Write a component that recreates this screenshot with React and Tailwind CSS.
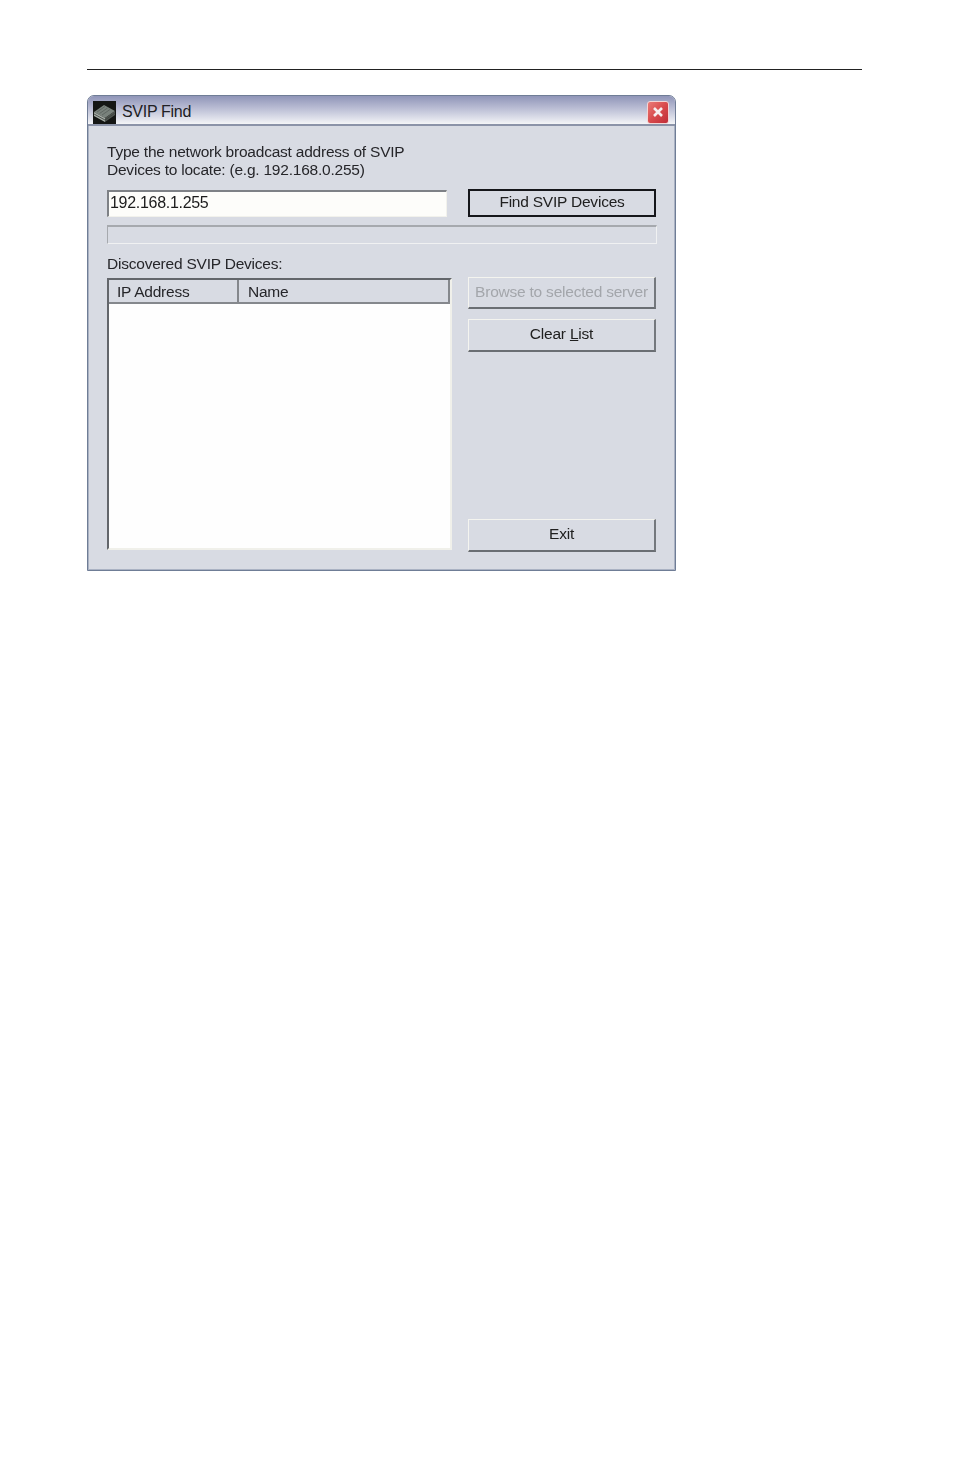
const font = "font-['Liberation_Sans',Arial,sans-serif]";

function RaisedButton({ children, disabled, className = '' }) {
  return (
    <button
      disabled={disabled}
      className={`w-[188px] flex items-center justify-center pb-[2px] border-t border-l border-r-2 border-b-2 border-t-[#f4f4ef] border-l-[#f4f4ef] border-r-[#74787d] border-b-[#6a6e73] bg-[#d8dbe3] text-[15.5px] leading-none tracking-[-0.22px] ${
        disabled ? 'text-[#a3a6ab]' : 'text-[#202020]'
      } ${className}`}
    >
      {children}
    </button>
  );
}

function AppIcon() {
  return (
    <svg width="23" height="23" viewBox="0 0 23 23" className="shrink-0">
      <rect width="23" height="23" fill="#141614" />
      <path d="M1 11 L11 4 L22 10 L12 17 Z" fill="#79827c" />
      <path d="M1 11 L12 17 L12 21 L1 15 Z" fill="#a5aca6" />
      <path d="M12 17 L22 10 L22 14 L12 21 Z" fill="#505651" />
      <path d="M4 11 L12 5.5 M6.5 12.5 L14.5 7 M9 14 L17 8.5" stroke="#5f6662" strokeWidth="1" />
      <path d="M1 13 L12 19 L22 12" fill="none" stroke="#3a3f3b" strokeWidth="0.8" />
    </svg>
  );
}

function CloseButton() {
  return (
    <div className="w-[22px] h-[23px] rounded-[3px] border border-[#f2d6d6] bg-gradient-to-br from-[#ea7a78] via-[#d84a4c] to-[#c02c38] flex items-center justify-center">
      <svg width="12" height="12" viewBox="0 0 12 12">
        <path d="M2 2 L10 10 M10 2 L2 10" stroke="#f7eeee" strokeWidth="2.6" />
      </svg>
    </div>
  );
}

export default function App() {
  return (
    <div className={`${font} min-h-[1474px] bg-white pt-[69px] pl-[87px] pr-[92px]`}>
      <div className="h-px bg-[#222222]" />

      {/* dialog */}
      <div className="mt-[25px] w-[589px] h-[476px] flex flex-col rounded-t-[7px] border border-[#6f7d96] bg-[#d8dbe3] overflow-hidden blur-[0.4px]">
        {/* title bar */}
        <div className="h-[30px] shrink-0 flex items-center pt-[4px] pl-[5px] pr-[6px] bg-gradient-to-b from-[#9095b8] via-[#c0c3d8] to-[#f4f5f7] border-b-2 border-[#8b93a8]">
          <AppIcon />
          <span className="ml-[6px] text-[16px] tracking-[-0.3px] text-[#202024]">SVIP Find</span>
          <div className="ml-auto">
            <CloseButton />
          </div>
        </div>

        {/* body */}
        <div className="flex-1 flex flex-col pl-[18px] pr-[17px] pt-[17px] pb-[19px] border-x border-b border-[#aab2c3] text-[#26262a] text-[15.5px] tracking-[-0.22px]">
          <p className="leading-[18px]">
            Type the network broadcast address of SVIP
            <br />
            Devices to locate: (e.g. 192.168.0.255)
          </p>

          <div className="mt-[10px] flex justify-between">
            <div className="w-[340px] h-[27px] mt-px flex items-center pl-[1px] pb-[2px] bg-[#fdfdfa] border-t-2 border-l-2 border-t-[#7e8186] border-l-[#7e8186] border-b border-r border-b-[#f2f2ec] border-r-[#f2f2ec] text-[16px] tracking-[-0.3px] text-[#1c1c1c]">
              192.168.1.255
            </div>
            <button className="w-[188px] h-[28px] mr-px flex items-center justify-center pb-[2px] border-2 border-[#15161a] bg-[#d8dbe3] text-[15.5px] tracking-[-0.22px] text-[#202020]">
              Find SVIP Devices
            </button>
          </div>

          <div className="mt-[8px] h-[19px] border-t-2 border-l border-t-[#a6a9ae] border-l-[#a6a9ae] border-b border-r border-b-[#f0f1f2] border-r-[#f0f1f2]" />

          <div className="mt-[11px] leading-[18px]">Discovered SVIP Devices:</div>

          <div className="mt-[5px] flex-1 flex justify-between">
            {/* list */}
            <div className="w-[345px] flex flex-col bg-[#fefefe] border-t-2 border-l-2 border-t-[#63666b] border-l-[#63666b] border-b-2 border-r-2 border-b-[#f0f0ea] border-r-[#f0f0ea]">
              <div className="h-[24px] shrink-0 flex pt-[1px] border-b-2 border-r-2 border-b-[#85888d] border-r-[#85888d] bg-[#d8dbe3]">
                <div className="w-[130px] pl-[8px] flex items-center border-r-2 border-[#84878c] -mt-[1px] pt-[1px]">IP Address</div>
                <div className="pl-[9px] flex items-center">Name</div>
              </div>
            </div>

            {/* buttons */}
            <div className="w-[188px] mr-px flex flex-col -mt-px">
              <RaisedButton disabled className="h-[32px]">Browse to selected server</RaisedButton>
              <RaisedButton className="h-[33px] mt-[10px]">
                <span>
                  Clear <span className="underline">L</span>ist
                </span>
              </RaisedButton>
              <RaisedButton className="h-[33px] mt-auto -mb-[2px]">Exit</RaisedButton>
            </div>
          </div>
        </div>
      </div>
    </div>
  );
}
